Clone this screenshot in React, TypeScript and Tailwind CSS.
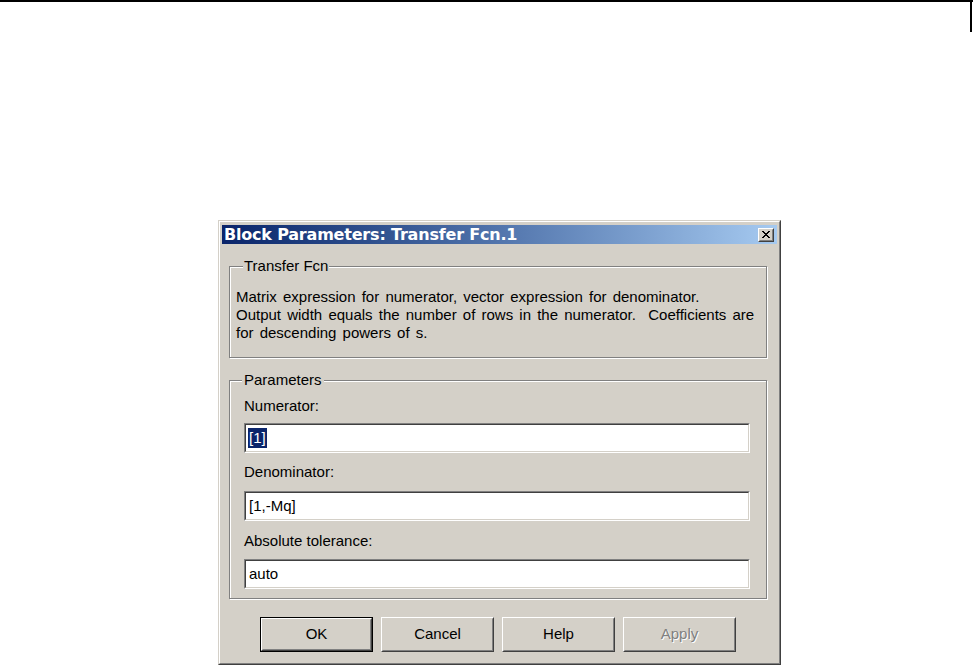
import { ReactNode } from 'react';

function WinButton({ label, isDefault, disabled }: { label: string; isDefault?: boolean; disabled?: boolean }) {
  return (
    <div className={`h-[35px] w-[113px] ${isDefault ? 'border border-black' : ''}`}>
      <div className="flex h-full w-full border border-t-white border-l-white border-r-[#404040] border-b-[#404040]">
        <div className="flex flex-1 items-center justify-center border border-t-[#d4d0c8] border-l-[#d4d0c8] border-r-[#808080] border-b-[#808080]">
          <span className={disabled ? 'text-[#808080] [text-shadow:1px_1px_0_#fff]' : 'text-black'}>{label}</span>
        </div>
      </div>
    </div>
  );
}

function Field({ children }: { children: ReactNode }) {
  return (
    <div className="h-[30px] w-[506px] border border-t-[#808080] border-l-[#808080] border-r-white border-b-white">
      <div className="flex h-full items-center border border-t-[#404040] border-l-[#404040] border-r-[#d4d0c8] border-b-[#d4d0c8] bg-white pl-[2px] leading-[18px]">
        {children}
      </div>
    </div>
  );
}

export default function App() {
  return (
    <div className="min-h-screen bg-white font-['Liberation_Sans',Arial,sans-serif] text-[15px] text-black">
      {/* page rule */}
      <div className="flex h-[32px] w-full justify-end border-t-2 border-black">
        <div className="mr-[1px] h-full w-[2px] bg-black" />
      </div>

      {/* dialog */}
      <div className="ml-[218px] mt-[188px] w-[563px] border border-t-[#d4d0c8] border-l-[#d4d0c8] border-r-[#404040] border-b-[#404040]">
        <div className="border border-t-white border-l-white border-r-[#808080] border-b-[#808080] bg-[#d4d0c8] px-[2px] pt-[3px] pb-[11px]">
          {/* title bar */}
          <div className="flex h-[19px] items-center justify-between bg-gradient-to-r from-[#0a246a] to-[#a6caf0] pl-[2px] pr-[3px]">
            <span className="font-['DejaVu_Sans',Verdana,sans-serif] text-[16px] font-bold leading-[19px] tracking-[-0.2px] text-white">
              Block Parameters: Transfer Fcn.1
            </span>
            <div className="h-[14px] w-[16px] border border-t-white border-l-white border-r-[#404040] border-b-[#404040] bg-[#d4d0c8]">
              <div className="flex h-full w-full items-center justify-center border border-t-[#d4d0c8] border-l-[#d4d0c8] border-r-[#808080] border-b-[#808080]">
                <svg width="8" height="7" viewBox="0 0 8 7">
                  <path d="M0 0h2v1h-2zM6 0h2v1h-2zM1 1h2v1h-2zM5 1h2v1h-2zM2 2h4v1h-4zM3 3h2v1h-2zM2 4h4v1h-4zM1 5h2v1h-2zM5 5h2v1h-2zM0 6h2v1h-2zM6 6h2v1h-2z" fill="#000" />
                </svg>
              </div>
            </div>
          </div>

          <div className="pl-[7px]">
            {/* description group */}
            <fieldset className="mt-[13px] w-[538px] min-w-0 border border-[#808080] pl-[6px] pt-[13px] pb-[15px] shadow-[inset_1px_1px_0_#fff,1px_1px_0_#fff]">
              <legend className="ml-[7px] bg-[#d4d0c8] px-[1px] leading-[18px]">Transfer Fcn</legend>
              <p className="leading-[18px] [word-spacing:2px]">
                Matrix expression for numerator, vector expression for denominator.
                <br />
                Output width equals the number of rows in the numerator.&nbsp; Coefficients are
                <br />
                for descending powers of s.
              </p>
            </fieldset>

            {/* parameters group */}
            <fieldset className="mt-[13px] w-[538px] min-w-0 border border-[#808080] pl-[14px] pt-[8px] pb-[9px] shadow-[inset_1px_1px_0_#fff,1px_1px_0_#fff]">
              <legend className="-ml-[2px] bg-[#d4d0c8] px-[2px] leading-[18px]">Parameters</legend>
              <div className="leading-[18px]">Numerator:</div>
              <div className="mt-[8px]">
                <Field>
                  <span className="inline-block bg-[#0a246a] px-[1px] leading-[20px] text-white">[1]</span>
                </Field>
              </div>
              <div className="mt-[10px] leading-[18px]">Denominator:</div>
              <div className="mt-[10px]">
                <Field>
                  <span className="pl-[1px]">[1,-Mq]</span>
                </Field>
              </div>
              <div className="mt-[11px] leading-[18px]">Absolute tolerance:</div>
              <div className="mt-[9px]">
                <Field>
                  <span className="pl-[1px]">auto</span>
                </Field>
              </div>
            </fieldset>
          </div>

          {/* buttons */}
          <div className="mt-[18px] flex gap-[8px] pl-[38px]">
            <WinButton label="OK" isDefault />
            <WinButton label="Cancel" />
            <WinButton label="Help" />
            <WinButton label="Apply" disabled />
          </div>
        </div>
      </div>
    </div>
  );
}
